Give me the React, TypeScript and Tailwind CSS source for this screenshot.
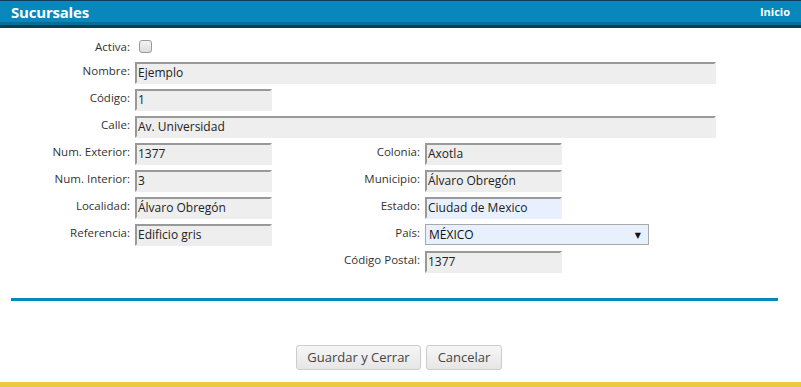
import React from "react";

function Field({
  value,
  wide,
  filled,
}: {
  value: string;
  wide?: boolean;
  filled?: boolean;
}) {
  return (
    <div
      className={`flex h-[22px] items-center border-2 border-t-[#999] border-l-[#999] ${
        filled
          ? "border-r-[#e8f0fe] border-b-[#e8f0fe] bg-[#e8f0fe]"
          : "border-r-[#eee] border-b-[#eee] bg-[#eee]"
      } ${wide ? "w-[581px]" : "w-[137px]"} pl-px text-[12px] text-[#222]`}
    >
      {value}
    </div>
  );
}

function Label({ text, w }: { text: string; w: string }) {
  return (
    <div className={`${w} text-right text-[11.5px] leading-[18px] text-[#333]`}>
      {text}
    </div>
  );
}

export default function App() {
  return (
    <div
      className="flex h-[387px] w-[801px] flex-col bg-white"
      style={{ fontFamily: '"Open Sans", "DejaVu Sans", sans-serif' }}
    >
      {/* Header */}
      <div className="flex h-[28px] items-center justify-between border-t border-t-[#0d3d58] border-b-[3px] border-b-[#0b3a53] bg-[#0787bb] pb-[2px] pl-[11px] pr-[11px] shadow-[inset_0_-3px_0_#066e9b]">
        <span className="text-[15px] font-bold tracking-[-0.2px] text-white">
          Sucursales
        </span>
        <span className="text-[11px] font-bold text-white">Inicio</span>
      </div>

      <div className="flex flex-col gap-[5px] pt-[8px]">
        <div className="flex h-[21px] items-center gap-[9px]">
          <div className="w-[130px] text-right text-[11.5px] text-[#333]">Activa:</div>
          <div className="h-[13px] w-[13px] rounded-[3px] border border-[#999] bg-[linear-gradient(#f4f4f4,#dcdcdc)]" />
        </div>

        <div className="flex gap-[5px]">
          <Label text="Nombre:" w="w-[130px]" />
          <Field value="Ejemplo" wide />
        </div>
        <div className="flex gap-[5px]">
          <Label text="Código:" w="w-[130px]" />
          <Field value="1" />
        </div>
        <div className="flex gap-[5px]">
          <Label text="Calle:" w="w-[130px]" />
          <Field value="Av. Universidad" wide />
        </div>

        <div className="flex">
          <div className="flex flex-col gap-[5px]">
            <div className="flex gap-[5px]">
              <Label text="Num. Exterior:" w="w-[130px]" />
              <Field value="1377" />
            </div>
            <div className="flex gap-[5px]">
              <Label text="Num. Interior:" w="w-[130px]" />
              <Field value="3" />
            </div>
            <div className="flex gap-[5px]">
              <Label text="Localidad:" w="w-[130px]" />
              <Field value="Álvaro Obregón" />
            </div>
            <div className="flex gap-[5px]">
              <Label text="Referencia:" w="w-[130px]" />
              <Field value="Edificio gris" />
            </div>
          </div>

          <div className="flex flex-col gap-[5px]">
            <div className="flex gap-[5px]">
              <Label text="Colonia:" w="w-[148px]" />
              <Field value="Axotla" />
            </div>
            <div className="flex gap-[5px]">
              <Label text="Municipio:" w="w-[148px]" />
              <Field value="Álvaro Obregón" />
            </div>
            <div className="flex gap-[5px]">
              <Label text="Estado:" w="w-[148px]" />
              <Field value="Ciudad de Mexico" filled />
            </div>
            <div className="flex gap-[5px]">
              <Label text="País:" w="w-[148px]" />
              <div className="flex h-[21px] w-[224px] items-center justify-between border border-[#a9a9a9] bg-[#e8f0fe] pl-[3px] pr-[7px] text-[12px] text-[#111]">
                <span>MÉXICO</span>
                <span className="text-[8px]">▼</span>
              </div>
            </div>
            <div className="mt-[1px] flex gap-[5px]">
              <Label text="Código Postal:" w="w-[148px]" />
              <Field value="1377" />
            </div>
          </div>
        </div>
      </div>

      <div className="mx-[11px] mt-[25px] h-[3px] w-[767px] bg-[#0787bb]" />

      <div className="mt-[44px] flex justify-center gap-[5px] pr-[3px]">
        <button className="h-[25px] w-[125px] rounded-[3px] border border-[#ccc] bg-[linear-gradient(#f6f6f6,#e6e6e6)] text-[13px] text-[#444]">
          Guardar y Cerrar
        </button>
        <button className="h-[25px] w-[76px] rounded-[3px] border border-[#ccc] bg-[linear-gradient(#f6f6f6,#e6e6e6)] text-[13px] text-[#444]">
          Cancelar
        </button>
      </div>

      <div className="mt-auto h-[5px] w-full bg-[#e9c93f]" />
    </div>
  );
}
